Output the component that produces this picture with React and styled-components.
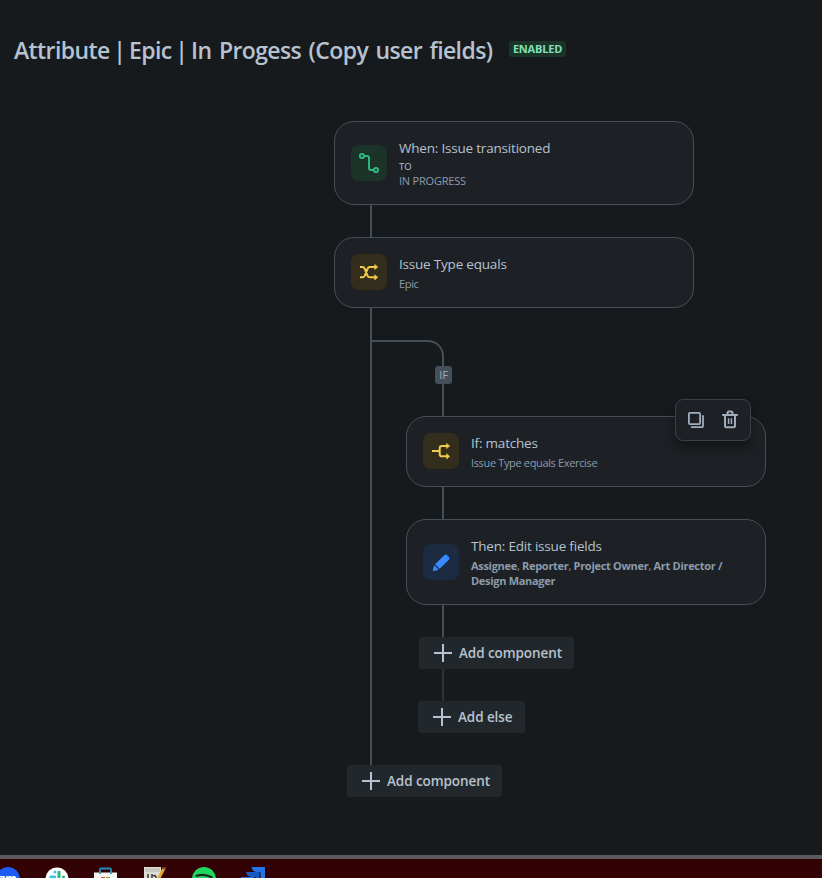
import React from "react";
import styled, { createGlobalStyle } from "styled-components";

const line = "#454f59";

const icons = {
  transition: (
    <g fill="none" stroke="#2fb67c" strokeWidth="2">
      <circle cx="11" cy="11" r="2.1" />
      <circle cx="25" cy="25" r="2.1" />
      <path d="M13 11h3q2 0 2 2v10q0 2 2 2h3" />
    </g>
  ),
  shuffle: (
    <g fill="none" stroke="#f0cb4c" strokeWidth="2">
      <path d="M9 13h2.4q1.6 0 2.3 1.6l2.9 7.2q.6 1.5 2.2 1.5H24M9 23.3h2.4q1.6 0 2.3-1.5l2.9-7.2q.6-1.6 2.2-1.6H24" />
      <path d="M23.7 10.4L26.8 13l-3.1 2.6zM23.7 20.7l3.1 2.6-3.1 2.6z" fill="#f0cb4c" strokeWidth=".6" />
    </g>
  ),
  branch: (
    <g fill="none" stroke="#f0cb4c" strokeWidth="2">
      <path d="M9 18h7.6M24 13h-5.2q-2.1 0-2.1 2v6.2q0 2.1 2.1 2.1H24" />
      <path d="M23.6 10.4L26.7 13l-3.1 2.6zM23.6 20.7l3.1 2.6-3.1 2.6z" fill="#f0cb4c" strokeWidth=".6" />
    </g>
  ),
  pencil: (
    <g fill="#388bff">
      <path d="M12.1 20.2l9.1-9q1.5-1.4 3 0l1.7 1.7q1.4 1.4 0 2.8l-9.2 9z" />
      <path d="M11.3 21.2l4.5 4.5-4.9 1.4q-1.4.2-1-1z" />
    </g>
  ),
};

const StepCard = ({ icon, tone, title, height, gap, children, actions }) => (
  <Card $height={height}>
    <IconTile $tone={tone}>
      <svg width="36" height="36" viewBox="0 0 36 36">
        {icons[icon]}
      </svg>
    </IconTile>
    <CardText>
      <CardTitle>{title}</CardTitle>
      <Details $gap={gap}>{children}</Details>
    </CardText>
    {actions && <Actions />}
  </Card>
);

const Actions = () => (
  <ActionBar>
    <ActionButton>
      <svg width="18" height="20" viewBox="0 0 18 20" fill="none" stroke="#9fadbc" strokeWidth="1.8">
        <rect x="1.9" y="2.9" width="11.2" height="11.2" rx="1" />
        <path d="M16 5.2v11.1q0 .8-.8.8H4" />
      </svg>
    </ActionButton>
    <ActionButton>
      <svg width="18" height="20" viewBox="0 0 18 20" fill="none" stroke="#9fadbc" strokeWidth="2">
        <path d="M1.2 5h15.6M4 5v11q0 1.2 1.2 1.2h7.6q1.2 0 1.2-1.2V5M6.5 4.5V3.2q0-1.6 1.5-1.6h2q1.5 0 1.5 1.6v1.3" />
        <path d="M7.6 8.3v5.8M10.4 8.3v5.8" strokeWidth="1.5" />
      </svg>
    </ActionButton>
  </ActionBar>
);

const AddButton = ({ children, offset }) => (
  <Button $offset={offset}>
    <svg width="18" height="18" viewBox="0 0 18 18" stroke="#b6c2cf" strokeWidth="2">
      <path d="M0 9h18M9 0v18" />
    </svg>
    <span>{children}</span>
  </Button>
);

const Taskbar = () => (
  <TaskbarStrip>
    <TaskIcon viewBox="0 0 24 24">
      <circle cx="12" cy="12" r="12" fill="#1c5cf0" />
      <text x="12" y="16" textAnchor="middle" fontFamily="Open Sans, sans-serif" fontSize="12" fontWeight="700" fill="#fff">
        zm
      </text>
    </TaskIcon>
    <TaskIcon viewBox="0 0 24 24">
      <circle cx="12" cy="12" r="11.5" fill="#fff" />
      <g strokeWidth="3" strokeLinecap="round">
        <path d="M10 5v0M5.8 10h4" stroke="#36c5f0" />
        <path d="M14 5v5M18.5 10v0" stroke="#2eb67d" />
        <path d="M5.8 14v0M10 14v5" stroke="#e01e5a" />
        <path d="M14 14h4.5" stroke="#ecb22e" />
      </g>
    </TaskIcon>
    <TaskIcon viewBox="0 0 24 24">
      <path d="M6 8V2.500q0-1 1-1h9q1 0 1 1V8" fill="none" stroke="#278bb8" strokeWidth="1.8" />
      <path d="M0 5.500h23v15H0z" fill="#f4f4f4" />
      <path d="M6 7V4M17 7V4" fill="none" stroke="#278bb8" strokeWidth="1.6" />
      <path d="M7 10h4v4H7z" fill="#e64a2e" />
      <path d="M12 10h4v4h-4z" fill="#6ea52b" />
    </TaskIcon>
    <TaskIcon viewBox="0 0 24 24">
      <path d="M1 0h17v20H1z" fill="#deded5" />
      <path d="M2 2h15M2 4h15" stroke="#999" strokeWidth=".6" />
      <path d="M5 7v7M9 7v7M10 9q3-2 3 3" fill="none" stroke="#292929" strokeWidth="1.4" />
      <path d="M21 1.5l-7 13" stroke="#e0a72d" strokeWidth="3" />
      <path d="M22 0l-1.2 2.2" stroke="#8a3f35" strokeWidth="3" />
    </TaskIcon>
    <TaskIcon viewBox="0 0 24 24">
      <circle cx="12" cy="12" r="12" fill="#1ed760" />
      <path d="M4.5 8.8q8-2.4 15 1.5M5.5 13q6-1.8 12 1.5" fill="none" stroke="#18251d" strokeWidth="2.2" strokeLinecap="round" />
    </TaskIcon>
    <TaskIcon viewBox="0 0 24 24">
      <path d="M10.5 0H24v14q-4.5-1-4.5-5.5V5H16q-4.5 0-5.5-5z" fill="#2573e8" />
      <path d="M5 5h13.5v14q-4-1-4-5v-4H11q-5 0-6-5z" fill="#175ac4" />
      <path d="M0 10h13v13L8 16q-7 0-8-6z" fill="#2375ed" />
    </TaskIcon>
  </TaskbarStrip>
);

const App = () => (
  <Page>
    <GlobalStyle />
    <Header>
      <PageTitle>
        Attribute <Bar>|</Bar> Epic <Bar>|</Bar> In Progess (Copy user fields)
      </PageTitle>
      <Lozenge>ENABLED</Lozenge>
    </Header>
    <Flow>
      <StepCard icon="transition" tone="#1c3329" title="When: Issue transitioned" height={84} gap={1}>
        <Label>TO</Label>
        <Detail $spacing="-0.2px">IN PROGRESS</Detail>
      </StepCard>
      <Connector $height={32} />
      <StepCard icon="shuffle" tone="#332e1b" title="Issue Type equals" height={71} gap={2}>
        <Detail>Epic</Detail>
      </StepCard>
      <BranchRow>
        <Trunk />
        <Branch>
          <Elbow />
          <IfBadge>IF</IfBadge>
          <BranchSteps>
            <Connector $height={32} />
            <StepCard icon="branch" tone="#332e1b" title="If: matches" height={71} gap={2} actions>
              <Detail>Issue Type equals Exercise</Detail>
            </StepCard>
            <Connector $height={32} />
            <StepCard icon="pencil" tone="#1c2b41" title="Then: Edit issue fields" height={86} gap={2}>
              <Detail $spacing="-0.3px">
                <b>Assignee</b>, <b>Reporter</b>, <b>Project Owner</b>, <b>Art Director /</b>
                <br />
                <b>Design Manager</b>
              </Detail>
            </StepCard>
            <Connector $height={32} />
            <AddButton offset={13}>Add component</AddButton>
            <Connector $height={32} $faint />
            <AddButton offset={12}>Add else</AddButton>
          </BranchSteps>
        </Branch>
      </BranchRow>
      <AddButton offset={13}>Add component</AddButton>
    </Flow>
    <Taskbar />
  </Page>
);

export default App;

const GlobalStyle = createGlobalStyle`
  * {
    box-sizing: border-box;
  }
  body {
    margin: 0;
    background: #161a1d;
    font-family: "Open Sans", "Noto Sans", sans-serif;
    overflow: hidden;
  }
  svg {
    display: block;
    flex-shrink: 0;
  }
`;

const Page = styled.div`
  display: flex;
  flex-direction: column;
  width: 822px;
  height: 878px;
  background: #161a1d;
  overflow: hidden;
`;

const Header = styled.header`
  display: flex;
  align-items: flex-start;
  gap: 16px;
  height: 121px;
  padding: 34px 0 0 14px;
`;

const PageTitle = styled.h1`
  width: 479px;
  margin: 0;
  color: #b6c2cf;
  font-size: 23px;
  font-weight: 600;
  line-height: 32px;
  letter-spacing: -0.6px;
  word-spacing: 2px;
  white-space: nowrap;
`;

const Bar = styled.span`
  margin: 0 -3.7px;
`;

const Lozenge = styled.span`
  width: 57px;
  height: 16px;
  margin-top: 7px;
  border-radius: 3px;
  background: #1c3329;
  color: #7ee2b8;
  font-size: 11px;
  font-weight: 700;
  line-height: 16px;
  letter-spacing: -0.2px;
  text-align: center;
`;

const Flow = styled.main`
  flex: 1;
  padding-left: 334px;
`;

const Card = styled.section`
  position: relative;
  display: flex;
  align-items: center;
  gap: 12px;
  width: 360px;
  height: ${(p) => p.$height}px;
  padding: 0 16px;
  border: 1px solid ${line};
  border-radius: 20px;
  background: #1d2125;
`;

const IconTile = styled.div`
  width: 36px;
  height: 36px;
  margin-bottom: 1px;
  border-radius: 8px;
  background: ${(p) => p.$tone};
`;

const CardText = styled.div`
  white-space: nowrap;
`;

const CardTitle = styled.div`
  color: #b6c2cf;
  font-size: 13.5px;
  line-height: 20px;
  letter-spacing: -0.2px;
`;

const Details = styled.div`
  margin-top: ${(p) => p.$gap}px;
`;

const Detail = styled.div`
  color: #8c9bab;
  font-size: 11px;
  line-height: 15px;
  letter-spacing: ${(p) => p.$spacing || "-0.35px"};
`;

const Label = styled.div`
  height: 14px;
  color: #b6c2cf;
  font-size: 9.5px;
  font-weight: 500;
  line-height: 16px;
`;

const ActionBar = styled.div`
  position: absolute;
  top: -18px;
  right: 14px;
  display: flex;
  align-items: center;
  justify-content: center;
  gap: 16px;
  width: 76px;
  height: 42px;
  border: 1px solid #38414a;
  border-radius: 8px;
  background: #1d2125;
  box-shadow: 0 8px 12px rgba(3, 4, 4, 0.36);
`;

const ActionButton = styled.button`
  padding: 0;
  border: 0;
  background: none;
`;

const Connector = styled.div`
  width: 2px;
  height: ${(p) => p.$height}px;
  margin-left: 36px;
  background: ${(p) => (p.$faint ? "#2c333a" : line)};
`;

const BranchRow = styled.div`
  display: flex;
  height: 457px;
`;

const Trunk = styled.div`
  width: 2px;
  margin-left: 36px;
  background: ${line};
`;

const Branch = styled.div`
  padding-top: 32px;
`;

const Elbow = styled.div`
  width: 72px;
  height: 26px;
  border-top: 2px solid ${line};
  border-right: 2px solid ${line};
  border-top-right-radius: 16px;
`;

const IfBadge = styled.div`
  width: 17px;
  height: 18px;
  margin-left: 63px;
  border-radius: 3px;
  background: ${line};
  color: #9fadbc;
  font-size: 11px;
  line-height: 18px;
  text-align: center;
`;

const BranchSteps = styled.div`
  padding-left: 34px;
`;

const Button = styled.button`
  display: flex;
  align-items: center;
  gap: 7px;
  height: 32px;
  margin-left: ${(p) => p.$offset}px;
  padding: 0 12px 0 15px;
  border: 0;
  border-radius: 3px;
  background: #22272b;
  color: #b6c2cf;
  font: 600 13.5px/32px "Open Sans", sans-serif;
  letter-spacing: -0.08px;
  white-space: nowrap;
`;

const TaskbarStrip = styled.footer`
  display: flex;
  gap: 25px;
  height: 23px;
  padding-top: 8px;
  border-top: 4px solid #5b5a5f;
  background: #320204;
`;

const TaskIcon = styled.svg`
  width: 24px;
  height: 24px;

  &:first-child {
    margin-left: -4px;
  }
`;
